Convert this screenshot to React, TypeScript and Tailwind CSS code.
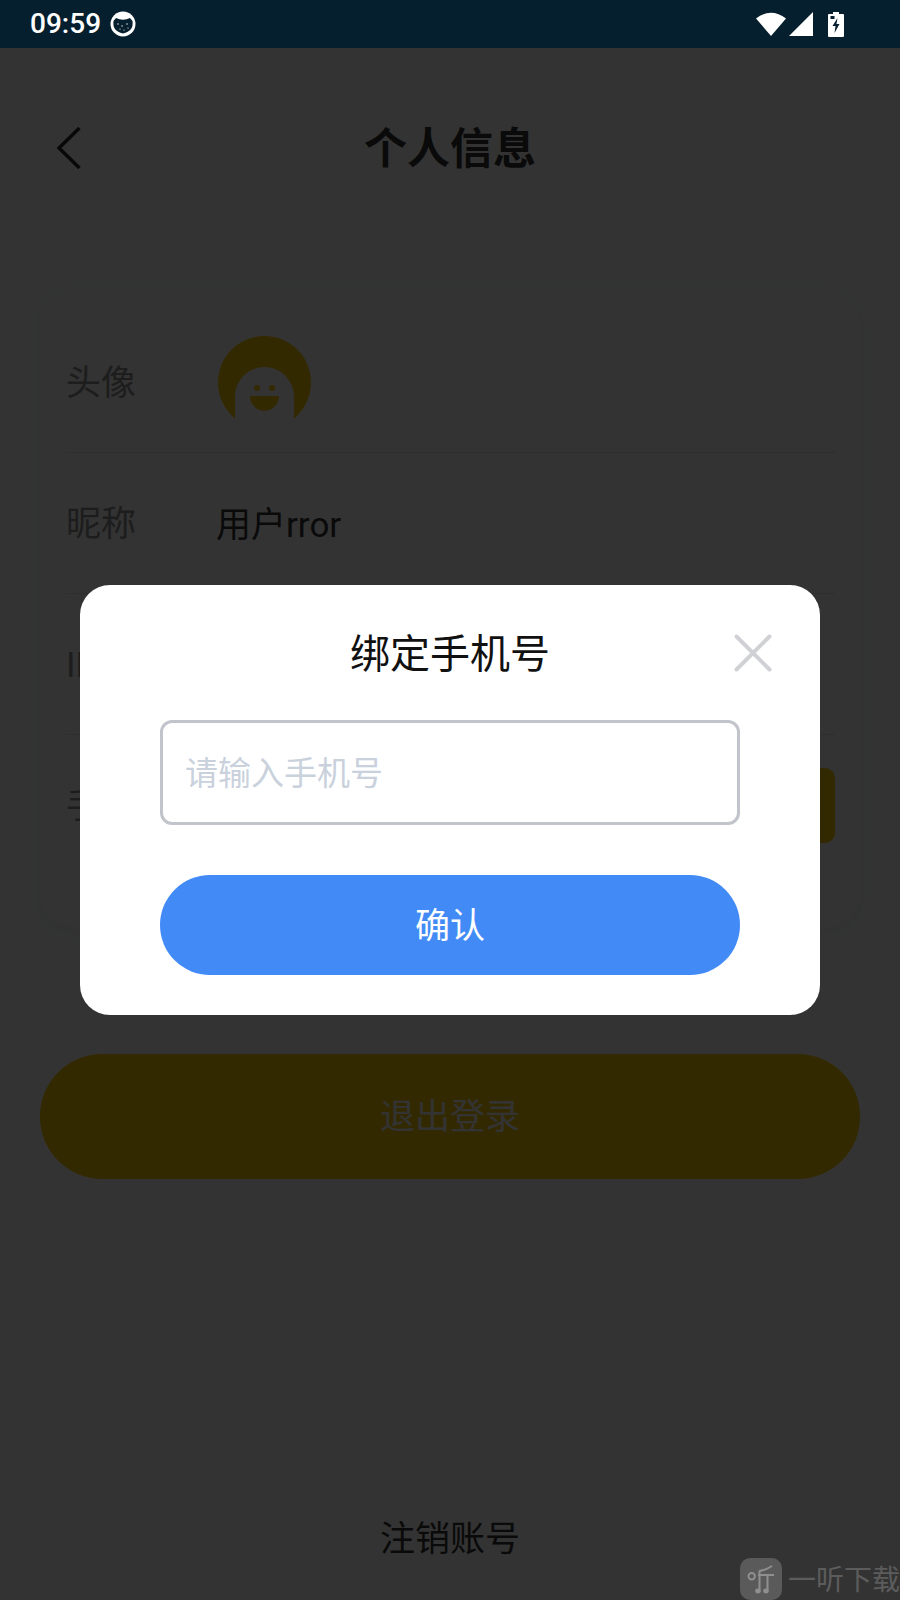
const cjk = "font-['Roboto','Noto_Sans_CJK_SC',sans-serif]";

function StatusBar() {
  return (
    <div className="relative z-20 flex h-12 items-center bg-[#051f2e] text-white">
      <span className="ml-[30px] font-['Roboto',sans-serif] text-[28px] font-medium leading-none">09:59</span>
      <svg viewBox="0 0 26 26" className="ml-[9px] h-[26px] w-[26px]">
        <circle cx="13" cy="13" r="12.5" fill="#fff" />
        <path d="M3.5 10 L6 7 Q13 10.5 20 7 L22.5 10 Q24 20 13 22.5 Q2 20 3.5 10 Z" fill="#051f2e" />
        <circle cx="8" cy="13" r="0.7" fill="#fff" />
        <circle cx="12" cy="15" r="0.7" fill="#fff" />
        <circle cx="17" cy="13" r="0.7" fill="#fff" />
        <circle cx="10" cy="18" r="0.6" fill="#fff" />
        <circle cx="14" cy="19" r="0.6" fill="#fff" />
        <circle cx="18" cy="17" r="0.6" fill="#fff" />
      </svg>
      <div className="ml-auto mr-[56px] flex items-center">
        <svg viewBox="0 0 30 24" className="h-6 w-[30px]">
          <path d="M0 6.5 Q15 -5 30 6.5 L15 24 Z" fill="#fff" />
        </svg>
        <svg viewBox="0 0 24 24" className="ml-[3px] h-6 w-6">
          <path d="M24 0 V24 H0 Z" fill="#fff" />
        </svg>
        <svg viewBox="0 0 16 25" className="ml-[15px] h-[25px] w-4">
          <path d="M5 0 H11 V2 H15 Q16 2 16 3 V24 Q16 25 15 25 H1 Q0 25 0 24 V3 Q0 2 1 2 H5 Z" fill="#fff" />
          <path d="M9.5 6 L4.5 14 H7.5 L6.5 21 L11.5 12 H8.5 Z" fill="#051f2e" />
          <rect x="2.5" y="4" width="4" height="3" fill="#051f2e" />
        </svg>
      </div>
    </div>
  );
}

function Avatar() {
  return (
    <svg viewBox="0 0 93 93" className="ml-[2px] h-[93px] w-[93px]">
      <circle cx="46.5" cy="46.5" r="46.5" fill="#ffcb05" />
      <path d="M17 93 V60.5 A29.5 29.5 0 0 1 76 60.5 V93 Z" fill="#fff" />
      <circle cx="39" cy="52" r="3" fill="#ffcb05" />
      <circle cx="54" cy="52" r="3" fill="#ffcb05" />
      <path d="M32 60 H61 A14.5 15 0 0 1 32 60 Z" fill="#ffcb05" />
    </svg>
  );
}

function Row({ label, last, children }: { label: string; last?: boolean; children?: React.ReactNode }) {
  return (
    <div className={`flex h-[141px] items-center ${last ? "" : "border-b border-[#e6e6e6]"}`}>
      <span className="w-[150px] pt-1 text-[35px] text-[#8f8f8f]">{label}</span>
      {children}
    </div>
  );
}

export default function App() {
  return (
    <div className={`relative h-[1600px] w-[900px] overflow-hidden bg-[#fdffff] ${cjk}`}>
      <StatusBar />

      <div className="relative flex h-[200px] items-center justify-center">
        <svg viewBox="0 0 24 42" className="absolute left-[57px] top-[79px] h-[42px] w-6">
          <path d="M22.5 1 L2 21 L22.5 41" fill="none" stroke="#2a2a2a" strokeWidth="3.5" />
        </svg>
        <h1 className="pt-[2px] text-[43px] font-bold leading-none text-[#333333]">个人信息</h1>
      </div>

      <div className="mx-10 mt-10 h-[640px] rounded-[36px] bg-white pl-[26px] pr-[25px] pt-6 shadow-[0_4px_14px_rgba(0,0,0,0.06)]">
        <Row label="头像">
          <Avatar />
        </Row>
        <Row label="昵称">
          <span className="pt-[6px] text-[35px] text-[#333333]">用户rror</span>
        </Row>
        <Row label="ID" />
        <Row label="手机号" last>
          <button className="ml-auto h-[75px] w-[150px] rounded-[10px] bg-[#ffcb05] text-[30px] text-white">绑定</button>
        </Row>
      </div>

      <button className="mx-10 mt-[126px] flex h-[125px] w-[820px] items-center justify-center rounded-[62px] bg-[#ffcb05] pt-1 text-[35px] text-white">
        退出登录
      </button>
      <p className="mt-[336px] text-center text-[35px] leading-[50px] text-[#333333]">注销账号</p>

      {/* dim layer + dialog */}
      <div className="absolute inset-x-0 bottom-0 top-12 z-10 flex justify-center bg-black/80 pt-[537px]">
        <div className="relative h-[430px] w-[740px] rounded-[30px] bg-white px-20">
          <h2 className="mt-[44px] h-[50px] text-center text-[40px] leading-[52px] text-[#111111]">绑定手机号</h2>
          <svg viewBox="0 0 38 38" className="absolute right-[48px] top-[49px] h-[38px] w-[38px]">
            <path d="M2.5 2.5 L35.5 35.5 M35.5 2.5 L2.5 35.5" stroke="#d0d1d5" strokeWidth="4" strokeLinecap="round" />
          </svg>
          <input
            placeholder="请输入手机号"
            className="mt-[41px] h-[105px] w-full rounded-xl border-[3px] border-[#c1c4cb] pl-[22px] pr-[23px] pt-[2px] text-[33px] outline-none placeholder:text-[#c9d1dd]"
          />
          <button className="mt-[50px] h-[100px] w-full rounded-[50px] bg-[#428bf7] pt-1 text-[35px] text-white">确认</button>
        </div>
      </div>

      {/* watermark */}
      <div className="absolute bottom-0 right-0 z-20 flex h-[42px] items-start">
        <svg viewBox="0 0 42 42" className="h-[42px] w-[42px]">
          <rect width="42" height="42" rx="10" fill="#5a5a5a" />
          <circle cx="11.7" cy="18.3" r="3.2" fill="none" stroke="#8f8f8f" strokeWidth="2" />
          <path d="M19 13 Q26 12 32 8 M18 17 H34 M19.5 13 V32 M27.5 17 V32" fill="none" stroke="#8f8f8f" strokeWidth="2" />
          <ellipse cx="18" cy="33" rx="2.8" ry="2.4" fill="#8f8f8f" />
          <ellipse cx="26" cy="33" rx="2.8" ry="2.4" fill="#8f8f8f" />
        </svg>
        <span className="ml-[6px] whitespace-nowrap text-[28px] leading-[46px] text-[#5c5c5c]">一听下载</span>
      </div>
    </div>
  );
}
